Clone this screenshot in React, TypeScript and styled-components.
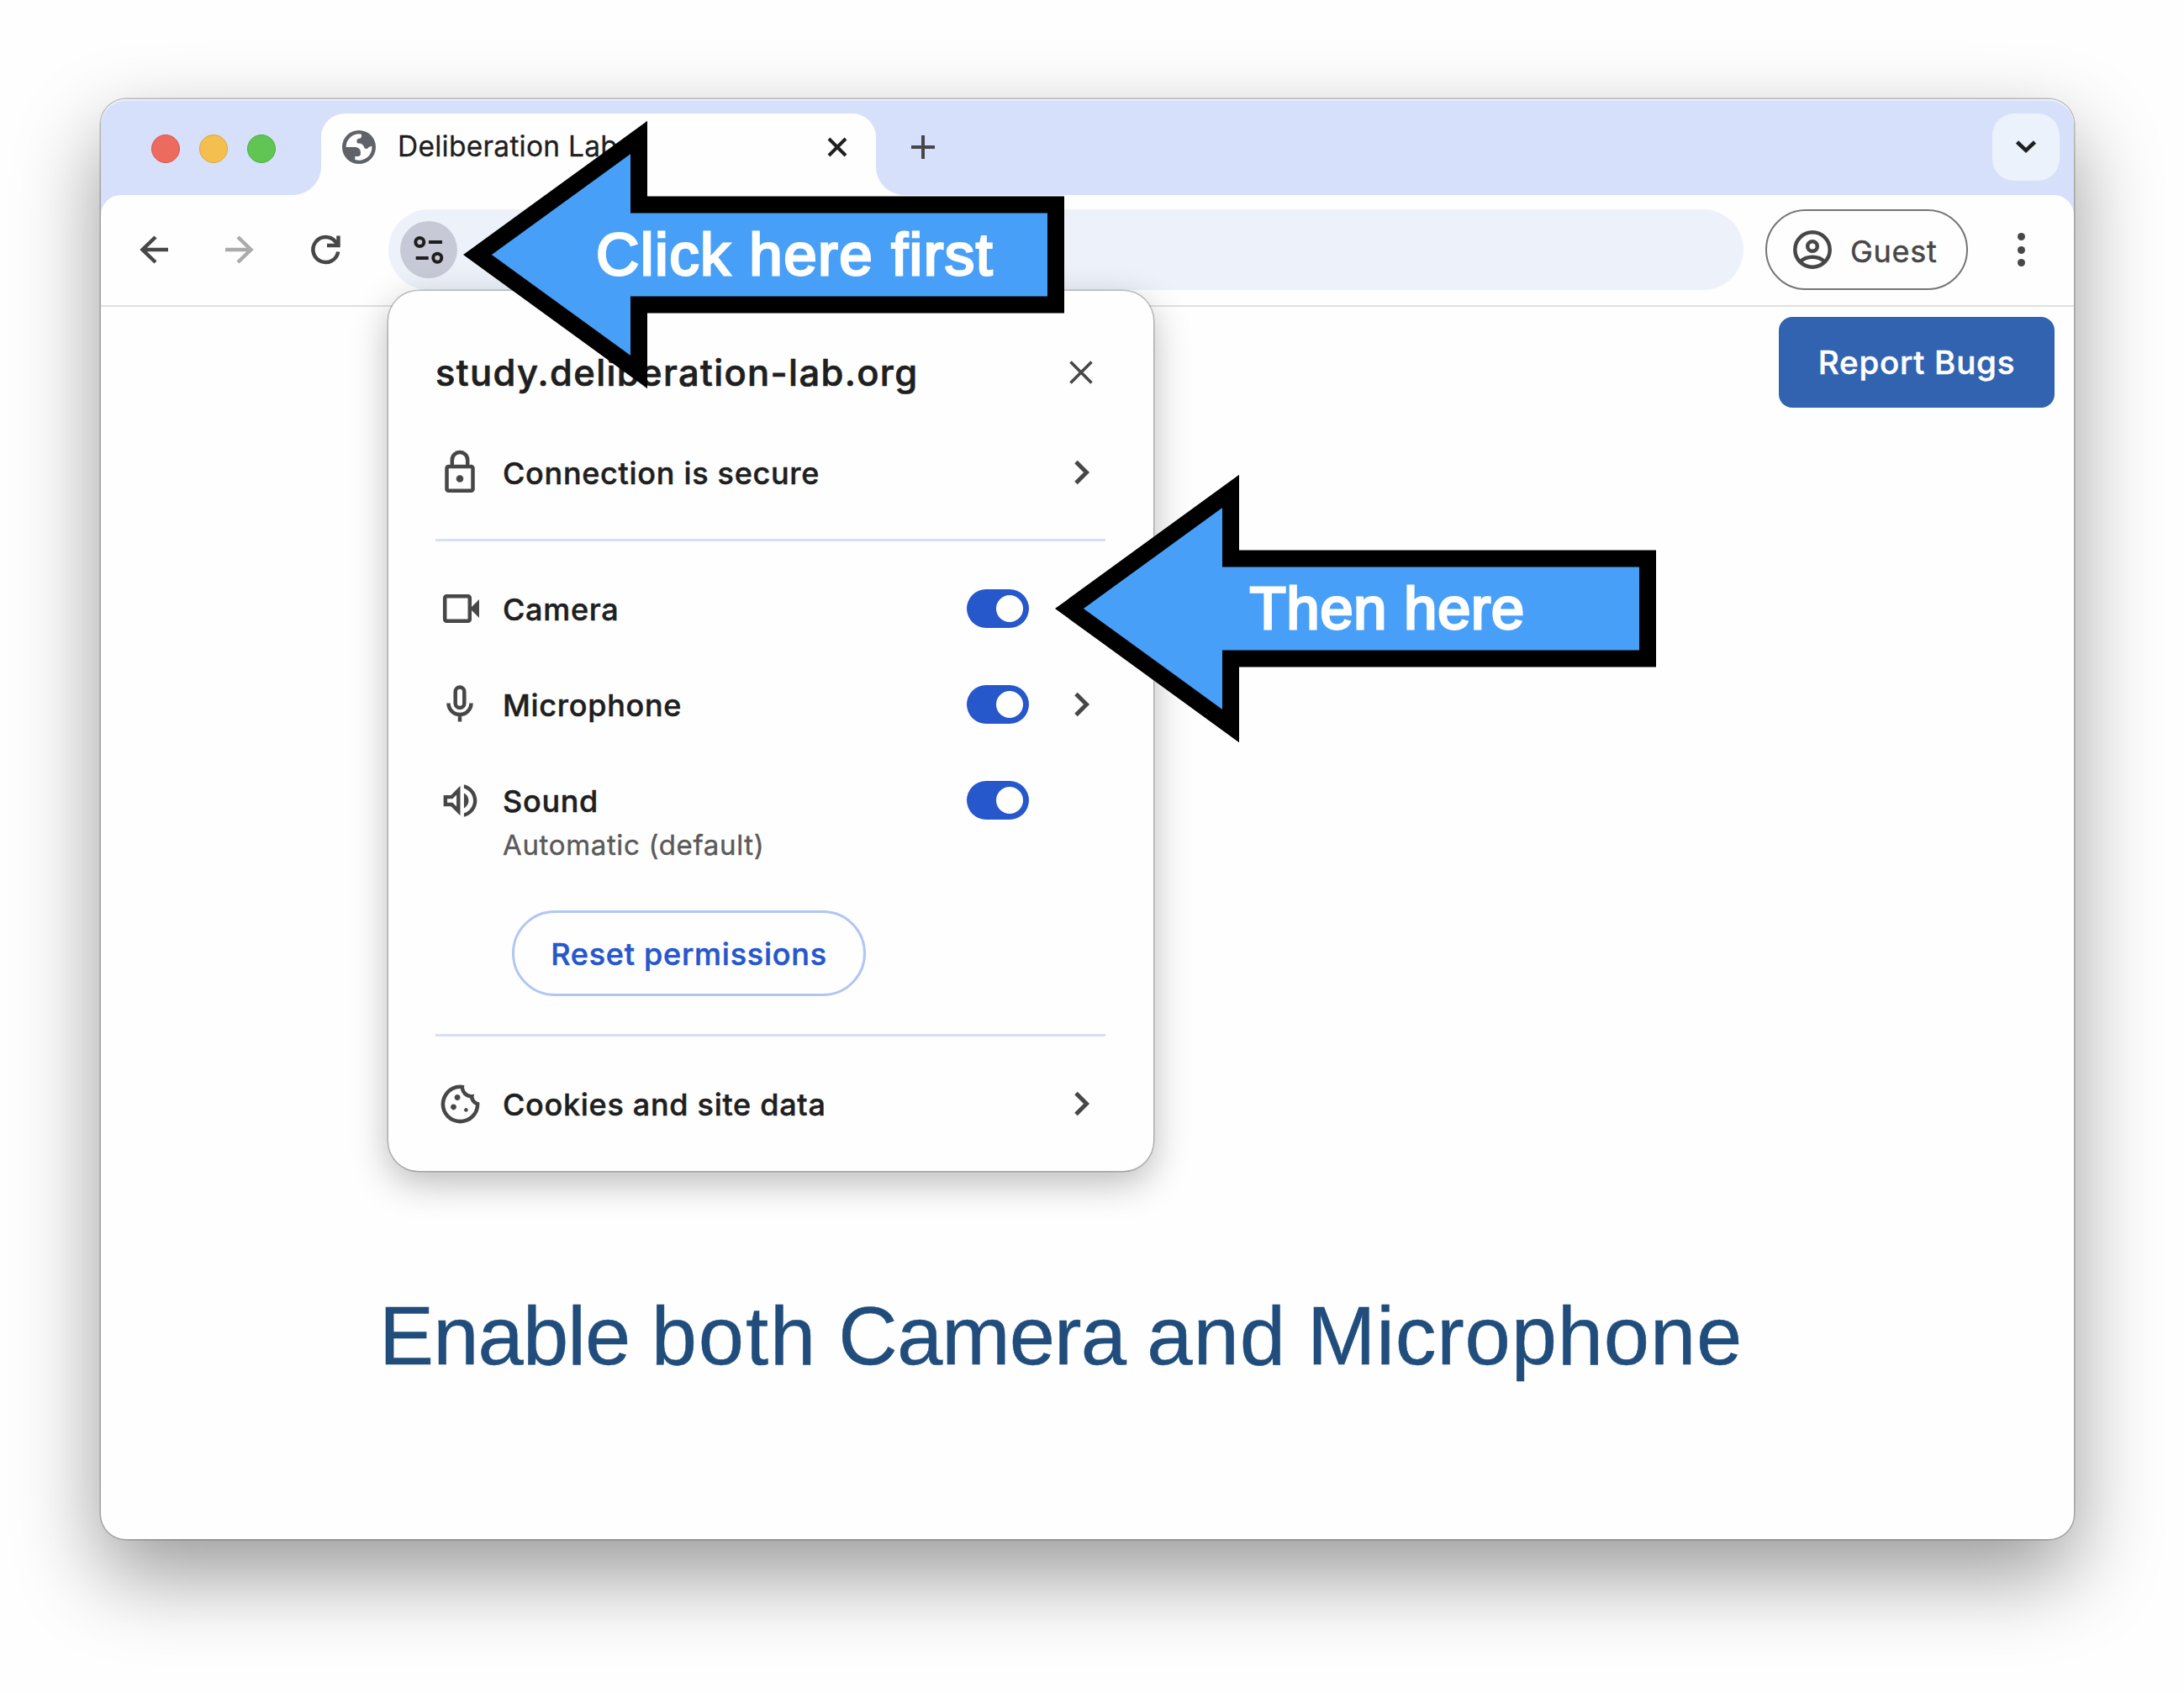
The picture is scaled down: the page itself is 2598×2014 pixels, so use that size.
import React from 'react';
import styled, { createGlobalStyle } from 'styled-components';

const Global = createGlobalStyle`
  *, *::before, *::after { box-sizing: border-box; }
  body { margin: 0; background: #fff; font-family: Inter, "Liberation Sans", sans-serif; }
`;

const Desktop = styled.main`
  width: 2598px;
  height: 2014px;
  padding: 118px 0 0 120px;
  overflow: hidden;
  background: #fefefe;
`;

const BrowserWindow = styled.div`
  position: relative;
  display: flex;
  flex-direction: column;
  width: 2347px;
  height: 1713px;
  border-radius: 30px;
  background: #fefefe;
  box-shadow: 0 0 0 1.5px rgba(0, 0, 0, 0.22), 0 42px 100px rgba(0, 0, 0, 0.4);
`;

const TabStrip = styled.div`
  display: flex;
  align-items: flex-end;
  height: 138px;
  margin-bottom: -24px;
  padding-bottom: 24px;
  border-radius: 30px 30px 0 0;
  background: #d6e0fb;
  box-shadow: inset 0 2px 0 rgba(255, 255, 255, 0.45);
`;

const TrafficLights = styled.div`
  display: flex;
  align-items: center;
  align-self: flex-start;
  gap: 23px;
  width: 228px;
  height: 117px;
  padding-left: 60px;
`;

const Light = styled.span<{ $color: string; $edge: string }>`
  width: 34px;
  height: 34px;
  border-radius: 50%;
  background: ${(p) => p.$color};
  border: 1px solid ${(p) => p.$edge};
`;

const Flare = styled.span<{ $side: 'left' | 'right' }>`
  width: 34px;
  height: 34px;
  background: radial-gradient(
    circle at ${(p) => (p.$side === 'left' ? '0 0' : '100% 0')},
    transparent 33.5px,
    #fefefe 34.5px
  );
`;

const Tab = styled.div`
  display: flex;
  align-items: center;
  width: 660px;
  height: 97px;
  padding: 0 34px 17px 25px;
  border-radius: 28px 28px 0 0;
  background: #fefefe;
`;

const TabTitle = styled.span`
  flex: 1;
  margin-left: 26px;
  padding-bottom: 2px;
  font-size: 33.5px;
  line-height: 40px;
  letter-spacing: 0.25px;
  color: #1f1f1f;
  white-space: nowrap;
  -webkit-text-stroke: 0.3px #1f1f1f;
`;

const NewTab = styled.div`
  display: flex;
  align-items: center;
  height: 97px;
  padding-bottom: 17px;
  margin-left: 8px;
`;

const TabSearch = styled.div`
  display: flex;
  align-items: center;
  justify-content: center;
  width: 80px;
  height: 80px;
  margin: 0 17px 17px auto;
  border-radius: 26px;
  background: #ebf2fc;
`;

const Toolbar = styled.div`
  display: flex;
  align-items: center;
  height: 133px;
  padding: 0 0 1px 39px;
  border-radius: 24px 24px 0 0;
  border-bottom: 2px solid #e0e0e0;
  background: #fefefe;
`;

const NavButtons = styled.div`
  display: flex;
  gap: 54px;
`;

const Omnibox = styled.div`
  display: flex;
  align-items: center;
  width: 1612px;
  height: 96px;
  margin-left: 51px;
  padding-left: 14px;
  border-radius: 48px;
  background: #edf2fa;
`;

const SiteControls = styled.div`
  display: flex;
  align-items: center;
  justify-content: center;
  width: 68px;
  height: 68px;
  border-radius: 50%;
  background: #c7cad6;
`;

const GuestPill = styled.div`
  display: flex;
  align-items: center;
  width: 241px;
  height: 96px;
  margin-left: 26px;
  padding-left: 30px;
  gap: 21px;
  border: 2.5px solid #757575;
  border-radius: 48px;
`;

const GuestName = styled.span`
  padding-top: 4px;
  font-size: 36px;
  letter-spacing: 0.7px;
  color: #474747;
  -webkit-text-stroke: 0.5px #474747;
`;

const MenuDots = styled.div`
  display: flex;
  flex-direction: column;
  gap: 6.5px;
  margin-left: 59px;

  span {
    width: 9px;
    height: 9px;
    border-radius: 50%;
    background: #474747;
  }
`;

const Page = styled.div`
  display: flex;
  flex: 1;
  flex-direction: column;
  padding: 12px 23px 0 0;
`;

const ReportBugs = styled.div`
  display: flex;
  align-items: center;
  justify-content: center;
  align-self: flex-end;
  width: 328px;
  height: 108px;
  border-radius: 16px;
  background: #3163b0;
  font-size: 38.5px;
  font-weight: 500;
  letter-spacing: 0.75px;
  color: #fff;
  -webkit-text-stroke: 0.5px #fff;
`;

const Headline = styled.h1`
  margin: 1050px 0 0 331px;
  font-family: "Liberation Sans", Arial, sans-serif;
  font-size: 97.6px;
  font-weight: 400;
  line-height: 110px;
  word-spacing: -2px;
  color: #204d7c;
  white-space: nowrap;
  -webkit-text-stroke: 0.5px #204d7c;
`;

const Word = styled.span<{ $ls: number }>`
  letter-spacing: ${(p) => p.$ls}px;
`;

const Popup = styled.section`
  position: absolute;
  left: 342px;
  top: 228px;
  width: 910px;
  height: 1047px;
  padding: 37px 57px 0 56px;
  border-radius: 36px;
  background: #fefefe;
  box-shadow: 0 0 0 1.5px rgba(0, 0, 0, 0.22), 0 14px 44px rgba(0, 0, 0, 0.27);
`;

const PopupHeader = styled.header`
  display: flex;
  align-items: center;
  justify-content: space-between;
  height: 120px;
  margin-bottom: 19px;
  padding-right: 15px;
`;

const Host = styled.h2`
  margin: 0;
  font-size: 43.5px;
  font-weight: 500;
  line-height: 50px;
  letter-spacing: 1.35px;
  color: #1f1f1f;
  white-space: nowrap;
  -webkit-text-stroke: 0.7px #1f1f1f;
`;

const Row = styled.div`
  display: flex;
  align-items: center;
  height: 80px;
`;

const IconSlot = styled.span`
  display: flex;
  align-items: center;
  justify-content: center;
  width: 58px;
  margin-right: 22px;

  svg { flex-shrink: 0; }
`;

const Label = styled.span`
  margin-right: auto;
  padding-top: 2px;
  font-size: 36px;
  font-weight: 500;
  line-height: 44px;
  letter-spacing: 0.7px;
  color: #1f1f1f;
  white-space: nowrap;
  -webkit-text-stroke: 0.5px #1f1f1f;
`;

const Note = styled.div`
  display: flex;
  align-items: center;
  height: 26px;
  margin-left: 80px;
  font-size: 33px;
  letter-spacing: 0.65px;
  color: #5a5a5a;
  white-space: nowrap;
  -webkit-text-stroke: 0.4px #5a5a5a;
`;

const ChevronSlot = styled.span`
  display: flex;
  justify-content: center;
  width: 56px;
  margin-left: 35px;
  padding-right: 1px;
`;

const Toggle = styled.span`
  display: flex;
  align-items: center;
  justify-content: flex-end;
  width: 74px;
  height: 46px;
  padding-right: 7px;
  border-radius: 23px;
  background: #2657cb;

  &::after {
    content: "";
    width: 32px;
    height: 32px;
    border-radius: 50%;
    background: #fff;
  }
`;

const Permissions = styled.div`
  display: flex;
  flex-direction: column;
  gap: 34px;
`;

const Divider = styled.hr<{ $top: number; $bottom: number }>`
  height: 3px;
  margin: ${(p) => p.$top}px 0 ${(p) => p.$bottom}px;
  border: 0;
  background: #d5dff8;
`;

const ResetButton = styled.div`
  display: flex;
  align-items: center;
  justify-content: center;
  width: 421px;
  height: 102px;
  margin: 65px 0 0 91px;
  padding-top: 2px;
  border: 3px solid #b1c6f3;
  border-radius: 51px;
  font-size: 36px;
  font-weight: 500;
  letter-spacing: 0.75px;
  color: #2657cb;
  white-space: nowrap;
  -webkit-text-stroke: 0.5px #2657cb;
`;

const Callout = styled.div<{ $x: number; $y: number; $w: number }>`
  position: absolute;
  left: ${(p) => p.$x}px;
  top: ${(p) => p.$y}px;
  display: grid;
  width: ${(p) => p.$w}px;
  height: 320px;

  > * { grid-area: 1 / 1; }
`;

const CalloutText = styled.span<{ $left: number; $ls: number }>`
  align-self: center;
  padding-left: ${(p) => p.$left}px;
  padding-top: 1px;
  font-family: "Liberation Sans", Arial, sans-serif;
  font-size: 71px;
  line-height: 80px;
  letter-spacing: ${(p) => p.$ls}px;
  color: #fff;
  white-space: nowrap;
  -webkit-text-stroke: 2.8px #fff;
`;

const INK = '#474747';

const Stroke = ({ w, h, d, color = INK, sw = 4.5 }: { w: number; h: number; d: string; color?: string; sw?: number }) => (
  <svg width={w} height={h} viewBox={`0 0 ${w} ${h}`} fill="none" stroke={color} strokeWidth={sw}>
    <path d={d} />
  </svg>
);

const ChevronRight = () => <Stroke w={20} h={32} d="M3 3.5 15.5 16 3 28.5" sw={5} />;

const Globe = () => (
  <svg width="40" height="40" viewBox="0 0 120 120">
    <circle cx="60" cy="60" r="60" fill="#5f6368" />
    <path
      d="M14 60A46 46 0 0 1 69 14V22Q69 29 62 29H59Q52 30 52 38Q52 46 58 47Q66 46 72 51Q78 55 79 62Q81 66 88 66Q93 64 95 60L106 56A46 46 0 0 1 46 105V93H57Q66 92 66 83Q67 62 48 60Z"
      fill="#fefefe"
    />
  </svg>
);

const Reload = () => (
  <svg width="48" height="48" viewBox="0 0 48 48" fill="none" stroke={INK} strokeWidth="4.5">
    <path d="M39.2 26.5A15 15 0 1 1 36 14.5L38.5 18" />
    <path d="M39.5 7.5V18.9H26" />
  </svg>
);

const Tune = () => (
  <svg width="40" height="40" viewBox="0 0 40 40" fill="none" stroke="#1f1f1f" strokeWidth="4">
    <circle cx="9.3" cy="11" r="5" />
    <path d="M20 11H36M4.7 30H19.7" />
    <circle cx="30.3" cy="29.7" r="5" />
  </svg>
);

const Account = () => (
  <svg width="48" height="48" viewBox="0 0 48 48" fill="none" stroke={INK} strokeWidth="4.5">
    <circle cx="24" cy="24" r="20.7" />
    <circle cx="24" cy="20" r="5.8" />
    <path d="M9.5 38.5Q15 32.8 24 32.8T38.5 38.5" />
  </svg>
);

const Lock = () => (
  <svg width="54" height="54" viewBox="0 0 54 54" fill="none" stroke={INK} strokeWidth="4.5">
    <rect x="11.5" y="20" width="31" height="28.7" rx="2" />
    <path d="M17.8 20V12.2a9.2 9.2 0 0 1 18.4 0V20" />
    <circle cx="27" cy="34.5" r="4.3" fill={INK} stroke="none" />
  </svg>
);

const Camera = () => (
  <svg width="54" height="54" viewBox="0 0 54 54" fill="none" stroke={INK} strokeWidth="4.5">
    <rect x="9.2" y="12.2" width="29.6" height="29.6" rx="2" />
    <path d="M41 25 50 16V38L41 29Z" fill={INK} stroke="none" />
  </svg>
);

const Mic = () => (
  <svg width="54" height="54" viewBox="0 0 54 54" fill="none" stroke={INK} strokeWidth="4.5">
    <rect x="21.7" y="6.6" width="10.6" height="24.4" rx="5.3" />
    <path d="M13.5 25.5a13.5 13.5 0 0 0 27 0M27 39V47.5" />
  </svg>
);

const Sound = () => (
  <svg width="53" height="53" viewBox="0 0 24 24" fill={INK}>
    <path d="M3 9v6h4l5 5V4L7 9H3zm7-.17v6.34L7.83 13H5v-2h2.83L10 8.83zM16.5 12c0-1.77-1.02-3.29-2.5-4.03v8.05c1.48-.73 2.5-2.25 2.5-4.02zM14 3.23v2.06c2.89.86 5 3.54 5 6.71s-2.11 5.85-5 6.71v2.06c4.01-.91 7-4.49 7-8.77s-2.99-7.86-7-8.77z" />
  </svg>
);

const Cookie = () => (
  <svg width="55" height="55" viewBox="0 -960 960 960" fill={INK}>
    <path d="M480-80q-83 0-156-31.5T197-197q-54-54-85.5-127T80-480q0-75 29-147t81-128.5q52-56.5 125-91T475-881q21 0 43 2t45 7q-9 45 6 85t45 66.5q30 26.5 71.5 36.5t85.5-5q-26 59 7.5 113t99.5 56q1 11 1.5 20.5t.5 20.5q0 82-31.5 154.5t-85.5 127q-54 54.5-127 86T480-80Zm-60-480q25 0 42.5-17.5T480-620q0-25-17.5-42.5T420-680q-25 0-42.5 17.5T360-620q0 25 17.5 42.5T420-560Zm-80 200q25 0 42.5-17.5T400-420q0-25-17.5-42.5T340-480q-25 0-42.5 17.5T280-420q0 25 17.5 42.5T340-360Zm260 40q17 0 28.5-11.5T640-360q0-17-11.5-28.5T600-400q-17 0-28.5 11.5T560-360q0 17 11.5 28.5T600-320ZM480-160q122 0 216.5-84T800-458q-50-22-78.5-60T683-603q-77-11-132-66t-68-132q-80-2-140.5 29t-101 79.5Q201-644 180.5-587T160-480q0 133 93.5 226.5T480-160Z" />
  </svg>
);

const ArrowShape = ({ width, head }: { width: number; head: number }) => (
  <svg width={width} height="320" viewBox={`0 0 ${width} 320`}>
    <path
      d={`M17 160 ${head} 20.5V100.5H${width - 10}V219.5H${head}V299.5Z`}
      fill="#489ff8"
      stroke="#000"
      strokeWidth="20"
      strokeMiterlimit="10"
    />
  </svg>
);

export default function App() {
  return (
    <>
      <Global />
      <Desktop>
        <BrowserWindow>
          <TabStrip>
            <TrafficLights>
              <Light $color="#ec6a5e" $edge="#d9594e" />
              <Light $color="#f4bf4f" $edge="#dca73d" />
              <Light $color="#61c554" $edge="#4fae42" />
            </TrafficLights>
            <Flare $side="left" />
            <Tab>
              <Globe />
              <TabTitle>Deliberation Lab</TabTitle>
              <Stroke w={24} h={24} d="M2 2 22 22M22 2 2 22" color="#1f1f1f" sw={4} />
            </Tab>
            <Flare $side="right" />
            <NewTab>
              <Stroke w={28} h={28} d="M14 0V28M0 14H28" sw={4} />
            </NewTab>
            <TabSearch>
              <Stroke w={26} h={18} d="M2.5 3 13 13 23.5 3" color="#1f1f1f" sw={4.5} />
            </TabSearch>
          </TabStrip>
          <Toolbar>
            <NavButtons>
              <Stroke w={48} h={48} d="M41 24H11M26 9 10.5 24 26 39" />
              <Stroke w={48} h={48} d="M7 24H37M22 9 37.5 24 22 39" color="#ababab" />
              <Reload />
            </NavButtons>
            <Omnibox>
              <SiteControls>
                <Tune />
              </SiteControls>
            </Omnibox>
            <GuestPill>
              <Account />
              <GuestName>Guest</GuestName>
            </GuestPill>
            <MenuDots>
              <span />
              <span />
              <span />
            </MenuDots>
          </Toolbar>
          <Page>
            <ReportBugs>Report Bugs</ReportBugs>
            <Headline>
              <Word $ls={-0.9}>Enable</Word> <Word $ls={1.9}>both</Word> <Word $ls={-0.9}>Camera</Word>{' '}
              <Word $ls={1}>and</Word> <Word $ls={0.8}>Microphone</Word>
            </Headline>
          </Page>

          <Popup>
            <PopupHeader>
              <Host>study.deliberation-lab.org</Host>
              <Stroke w={28} h={28} d="M1.5 1.5 26.5 26.5M26.5 1.5 1.5 26.5" sw={3.6} />
            </PopupHeader>
            <Row>
              <IconSlot><Lock /></IconSlot>
              <Label>Connection is secure</Label>
              <ChevronSlot><ChevronRight /></ChevronSlot>
            </Row>
            <Divider $top={39} $bottom={40} />
            <Permissions>
              <Row>
                <IconSlot><Camera /></IconSlot>
                <Label>Camera</Label>
                <Toggle />
                <ChevronSlot />
              </Row>
              <Row>
                <IconSlot><Mic /></IconSlot>
                <Label>Microphone</Label>
                <Toggle />
                <ChevronSlot><ChevronRight /></ChevronSlot>
              </Row>
              <Row>
                <IconSlot><Sound /></IconSlot>
                <Label>Sound</Label>
                <Toggle />
                <ChevronSlot />
              </Row>
            </Permissions>
            <Note>Automatic (default)</Note>
            <ResetButton>Reset permissions</ResetButton>
            <Divider $top={45} $bottom={40} />
            <Row>
              <IconSlot><Cookie /></IconSlot>
              <Label>Cookies and site data</Label>
              <ChevronSlot><ChevronRight /></ChevronSlot>
            </Row>
          </Popup>

          <Callout $x={431} $y={24.5} $w={715}>
            <ArrowShape width={715} head={209} />
            <CalloutText $left={158} $ls={1.45}>Click here first</CalloutText>
          </Callout>
          <Callout $x={1135} $y={445.5} $w={715}>
            <ArrowShape width={715} head={209} />
            <CalloutText $left={231.5} $ls={0.4}>Then here</CalloutText>
          </Callout>
        </BrowserWindow>
      </Desktop>
    </>
  );
}
